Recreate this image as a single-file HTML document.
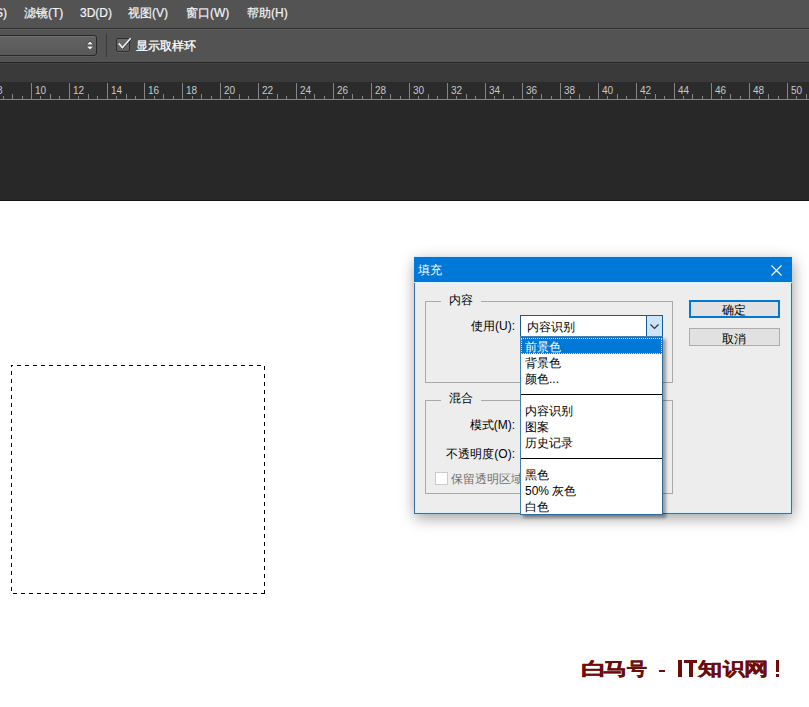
<!DOCTYPE html>
<html><head><meta charset="utf-8">
<style>
*{margin:0;padding:0;box-sizing:border-box;}
html,body{width:809px;height:707px;overflow:hidden;background:#fff;font-family:"Liberation Sans",sans-serif;}
.abs{position:absolute;}
#menubar{left:0;top:0;width:809px;height:28px;background:#535353;}
.mi{position:absolute;top:6px;font-size:12px;line-height:14px;color:#f4f4f4;white-space:nowrap;-webkit-text-stroke:0.2px #f4f4f4;}
#optbar{left:0;top:28px;width:809px;height:35px;background:#535353;border-top:1px solid #303030;}
#optline{left:0;top:29px;width:809px;height:1px;background:#5f5f5f;}
#band{left:0;top:62px;width:809px;height:20px;background:#3a3a3a;border-top:1px solid #242424;box-shadow:inset 0 1px 0 #444;}
#ruler{left:0;top:82px;width:809px;height:18px;background:#2b2b2b;}
#dark{left:0;top:100px;width:809px;height:101px;background:#282828;}
#darkedge{left:0;top:200px;width:809px;height:1px;background:#161616;}
#combo{left:-10px;top:35px;width:107px;height:21px;border:1px solid #282828;border-radius:3px;background:linear-gradient(#636363,#585858);box-shadow:inset 0 1px 0 #707070,0 1px 0 #5c5c5c;}
#sep{left:106px;top:34px;width:1px;height:23px;background:#3a3a3a;}
#chk{left:116px;top:38px;width:14px;height:14px;border:1px solid #2e2e2e;border-radius:2px;background:linear-gradient(#6a6a6a,#5e5e5e);box-shadow:0 1px 0 #606060;}
.ot{position:absolute;left:136px;top:39px;font-size:12px;line-height:14px;color:#fff;white-space:nowrap;-webkit-text-stroke:0.3px #fff;}
.rl{position:absolute;top:85px;font-size:10px;line-height:11px;color:#c8c8c8;}
.tk{position:absolute;width:1px;background:#858585;}
/* dialog */
#dlg{left:414px;top:257px;width:378px;height:257px;background:#ededed;border:1px solid #3a6fa6;box-shadow:inset 0 0 0 1px #d6f2ff,1px 4px 14px rgba(0,0,0,0.38);}
#title{left:414px;top:257px;width:378px;height:26px;background:#0078d7;border-bottom:1px solid #d6f2ff;}
.t{position:absolute;font-size:12px;line-height:14px;color:#000;white-space:nowrap;}
.grp{position:absolute;border:1px solid #a9a9a9;}
.gl{position:absolute;background:#ededed;padding:0 8px;font-size:12px;line-height:14px;color:#000;}
.btn{position:absolute;left:689px;width:91px;height:18px;background:#e1e1e1;border:1px solid #adadad;text-align:center;font-size:12px;line-height:15px;color:#000;}
#cb{left:520px;top:315px;width:143px;height:22px;background:#fff;border:1px solid #1b5a91;}
#cbbtn{left:646px;top:316px;width:16px;height:21px;background:#cce4f7;border-left:1px solid #1b5a91;}
#list{left:520px;top:336px;width:143px;height:179px;background:#fff;border:1px solid #3f7fb5;border-right-color:#2d6aa0;border-bottom-color:#2d6aa0;box-shadow:3px 3px 3px rgba(0,0,0,0.35);}
.li{position:absolute;left:525px;margin-top:1px;font-size:12px;line-height:16px;height:16px;color:#000;white-space:nowrap;}
.lsep{position:absolute;left:521px;width:141px;height:1px;background:#000;}
.mant{position:absolute;}
.wm{position:absolute;top:659px;font-size:21px;line-height:24px;font-weight:bold;color:#6e0b0b;-webkit-text-stroke:0.35px #6e0b0b;white-space:nowrap;transform:scaleY(0.85);transform-origin:0 0;}
</style></head><body>
<div id="menubar" class="abs">
  <div class="mi" style="left:-5px">S)</div>
  <div class="mi" style="left:24px">滤镜(T)</div>
  <div class="mi" style="left:80px">3D(D)</div>
  <div class="mi" style="left:128px">视图(V)</div>
  <div class="mi" style="left:186px">窗口(W)</div>
  <div class="mi" style="left:247px">帮助(H)</div>
</div>
<div id="optbar" class="abs"></div>
<div id="optline" class="abs"></div>
<div id="combo" class="abs"></div>
<svg class="abs" style="left:86px;top:40px" width="8" height="11" viewBox="0 0 8 11"><path d="M0.2 5 L4 0.6 L7.8 5 Z" fill="#303030"/><path d="M0.2 5.8 L4 10.2 L7.8 5.8 Z" fill="#303030" opacity="0.5"/><path d="M1 4.6 L4 1.4 L7 4.6 Z M1 6.4 L4 9.6 L7 6.4 Z" fill="#f4f4f4"/></svg>
<div id="sep" class="abs"></div>
<div id="chk" class="abs"></div>
<svg class="abs" style="left:118px;top:34px" width="15" height="17" viewBox="0 0 15 17"><path d="M1.3 10.2 L4.6 14.4 L13.2 4.8" fill="none" stroke="#262626" stroke-width="1.6" stroke-linejoin="round"/><path d="M0.8 9.4 L4.4 13.8 L12.7 4.3" fill="none" stroke="#f0f0f0" stroke-width="1.7" stroke-linejoin="round"/></svg>
<div class="ot">显示取样环</div>
<div id="band" class="abs"></div>
<div id="ruler" class="abs"></div>
<div id="rulerc">
<div class="tk" style="left:-7px;top:83px;height:16px"></div>
<div class="rl" style="left:-3px">8</div>
<div class="tk" style="left:3px;top:96px;height:3px"></div>
<div class="tk" style="left:12px;top:94px;height:5px"></div>
<div class="tk" style="left:22px;top:96px;height:3px"></div>
<div class="tk" style="left:31px;top:83px;height:16px"></div>
<div class="rl" style="left:35px">10</div>
<div class="tk" style="left:40px;top:96px;height:3px"></div>
<div class="tk" style="left:50px;top:94px;height:5px"></div>
<div class="tk" style="left:59px;top:96px;height:3px"></div>
<div class="tk" style="left:69px;top:83px;height:16px"></div>
<div class="rl" style="left:73px">12</div>
<div class="tk" style="left:78px;top:96px;height:3px"></div>
<div class="tk" style="left:88px;top:94px;height:5px"></div>
<div class="tk" style="left:97px;top:96px;height:3px"></div>
<div class="tk" style="left:107px;top:83px;height:16px"></div>
<div class="rl" style="left:111px">14</div>
<div class="tk" style="left:116px;top:96px;height:3px"></div>
<div class="tk" style="left:126px;top:94px;height:5px"></div>
<div class="tk" style="left:135px;top:96px;height:3px"></div>
<div class="tk" style="left:144px;top:83px;height:16px"></div>
<div class="rl" style="left:148px">16</div>
<div class="tk" style="left:154px;top:96px;height:3px"></div>
<div class="tk" style="left:163px;top:94px;height:5px"></div>
<div class="tk" style="left:173px;top:96px;height:3px"></div>
<div class="tk" style="left:182px;top:83px;height:16px"></div>
<div class="rl" style="left:186px">18</div>
<div class="tk" style="left:192px;top:96px;height:3px"></div>
<div class="tk" style="left:201px;top:94px;height:5px"></div>
<div class="tk" style="left:211px;top:96px;height:3px"></div>
<div class="tk" style="left:220px;top:83px;height:16px"></div>
<div class="rl" style="left:224px">20</div>
<div class="tk" style="left:229px;top:96px;height:3px"></div>
<div class="tk" style="left:239px;top:94px;height:5px"></div>
<div class="tk" style="left:248px;top:96px;height:3px"></div>
<div class="tk" style="left:258px;top:83px;height:16px"></div>
<div class="rl" style="left:262px">22</div>
<div class="tk" style="left:267px;top:96px;height:3px"></div>
<div class="tk" style="left:277px;top:94px;height:5px"></div>
<div class="tk" style="left:286px;top:96px;height:3px"></div>
<div class="tk" style="left:296px;top:83px;height:16px"></div>
<div class="rl" style="left:300px">24</div>
<div class="tk" style="left:305px;top:96px;height:3px"></div>
<div class="tk" style="left:314px;top:94px;height:5px"></div>
<div class="tk" style="left:324px;top:96px;height:3px"></div>
<div class="tk" style="left:333px;top:83px;height:16px"></div>
<div class="rl" style="left:337px">26</div>
<div class="tk" style="left:343px;top:96px;height:3px"></div>
<div class="tk" style="left:352px;top:94px;height:5px"></div>
<div class="tk" style="left:362px;top:96px;height:3px"></div>
<div class="tk" style="left:371px;top:83px;height:16px"></div>
<div class="rl" style="left:375px">28</div>
<div class="tk" style="left:381px;top:96px;height:3px"></div>
<div class="tk" style="left:390px;top:94px;height:5px"></div>
<div class="tk" style="left:400px;top:96px;height:3px"></div>
<div class="tk" style="left:409px;top:83px;height:16px"></div>
<div class="rl" style="left:413px">30</div>
<div class="tk" style="left:418px;top:96px;height:3px"></div>
<div class="tk" style="left:428px;top:94px;height:5px"></div>
<div class="tk" style="left:437px;top:96px;height:3px"></div>
<div class="tk" style="left:447px;top:83px;height:16px"></div>
<div class="rl" style="left:451px">32</div>
<div class="tk" style="left:456px;top:96px;height:3px"></div>
<div class="tk" style="left:466px;top:94px;height:5px"></div>
<div class="tk" style="left:475px;top:96px;height:3px"></div>
<div class="tk" style="left:485px;top:83px;height:16px"></div>
<div class="rl" style="left:489px">34</div>
<div class="tk" style="left:494px;top:96px;height:3px"></div>
<div class="tk" style="left:503px;top:94px;height:5px"></div>
<div class="tk" style="left:513px;top:96px;height:3px"></div>
<div class="tk" style="left:522px;top:83px;height:16px"></div>
<div class="rl" style="left:526px">36</div>
<div class="tk" style="left:532px;top:96px;height:3px"></div>
<div class="tk" style="left:541px;top:94px;height:5px"></div>
<div class="tk" style="left:551px;top:96px;height:3px"></div>
<div class="tk" style="left:560px;top:83px;height:16px"></div>
<div class="rl" style="left:564px">38</div>
<div class="tk" style="left:570px;top:96px;height:3px"></div>
<div class="tk" style="left:579px;top:94px;height:5px"></div>
<div class="tk" style="left:589px;top:96px;height:3px"></div>
<div class="tk" style="left:598px;top:83px;height:16px"></div>
<div class="rl" style="left:602px">40</div>
<div class="tk" style="left:607px;top:96px;height:3px"></div>
<div class="tk" style="left:617px;top:94px;height:5px"></div>
<div class="tk" style="left:626px;top:96px;height:3px"></div>
<div class="tk" style="left:636px;top:83px;height:16px"></div>
<div class="rl" style="left:640px">42</div>
<div class="tk" style="left:645px;top:96px;height:3px"></div>
<div class="tk" style="left:655px;top:94px;height:5px"></div>
<div class="tk" style="left:664px;top:96px;height:3px"></div>
<div class="tk" style="left:674px;top:83px;height:16px"></div>
<div class="rl" style="left:678px">44</div>
<div class="tk" style="left:683px;top:96px;height:3px"></div>
<div class="tk" style="left:692px;top:94px;height:5px"></div>
<div class="tk" style="left:702px;top:96px;height:3px"></div>
<div class="tk" style="left:711px;top:83px;height:16px"></div>
<div class="rl" style="left:715px">46</div>
<div class="tk" style="left:721px;top:96px;height:3px"></div>
<div class="tk" style="left:730px;top:94px;height:5px"></div>
<div class="tk" style="left:740px;top:96px;height:3px"></div>
<div class="tk" style="left:749px;top:83px;height:16px"></div>
<div class="rl" style="left:753px">48</div>
<div class="tk" style="left:759px;top:96px;height:3px"></div>
<div class="tk" style="left:768px;top:94px;height:5px"></div>
<div class="tk" style="left:778px;top:96px;height:3px"></div>
<div class="tk" style="left:787px;top:83px;height:16px"></div>
<div class="rl" style="left:791px">50</div>
<div class="tk" style="left:796px;top:96px;height:3px"></div>
<div class="tk" style="left:806px;top:94px;height:5px"></div>
<div class="tk" style="left:815px;top:96px;height:3px"></div>
<div class="tk" style="left:825px;top:83px;height:16px"></div>
<div class="rl" style="left:829px">52</div>
<div class="tk" style="left:834px;top:96px;height:3px"></div>
<div class="tk" style="left:844px;top:94px;height:5px"></div>
<div class="tk" style="left:853px;top:96px;height:3px"></div>
<div class="tk" style="left:0;top:99px;width:809px;height:1px"></div>
</div>
<div id="dark" class="abs"></div>
<div id="darkedge" class="abs"></div>

<!-- marching ants -->
<div class="mant" style="left:11px;top:365px;width:254px;height:1px;background:linear-gradient(90deg,#000 50%,transparent 50%) 6px 0/8px 1px repeat-x;"></div>
<div class="mant" style="left:11px;top:365px;width:1px;height:229px;background:linear-gradient(180deg,#000 50%,transparent 50%) 0 6px/1px 8px repeat-y;"></div>
<div class="mant" style="left:11px;top:593px;width:254px;height:1px;background:linear-gradient(90deg,#000 50%,transparent 50%) 2px 0/8px 1px repeat-x;"></div>
<div class="mant" style="left:264px;top:365px;width:1px;height:229px;background:linear-gradient(180deg,#000 50%,transparent 50%) 0 1px/1px 8px repeat-y;"></div>

<!-- dialog -->
<div id="dlg" class="abs"></div>
<div id="title" class="abs"></div>
<div class="abs" style="left:414px;top:256px;width:378px;height:1px;background:#cfeaff;opacity:0.7"></div>
<div class="t" style="left:418px;top:263px;color:#fff">填充</div>
<svg class="abs" style="left:771px;top:265px" width="11" height="11" viewBox="0 0 11 11"><path d="M0.5 0.5 L10.5 10.5 M10.5 0.5 L0.5 10.5" stroke="#fff" stroke-width="1.1"/></svg>

<div class="grp" style="left:425px;top:301px;width:248px;height:82px;"></div>
<div class="gl" style="left:441px;top:293px;">内容</div>
<div class="t" style="right:294px;top:319px;">使用(U):</div>

<div class="grp" style="left:425px;top:400px;width:248px;height:94px;"></div>
<div class="gl" style="left:441px;top:391px;">混合</div>
<div class="t" style="right:294px;top:418px;">模式(M):</div>
<div class="t" style="right:294px;top:447px;">不透明度(O):</div>
<div class="abs" style="left:435px;top:472px;width:13px;height:13px;background:#fff;border:1px solid #cccccc;"></div>
<div class="t" style="left:451px;top:472px;color:#707070">保留透明区域</div>

<div class="btn" style="top:300px;border:2px solid #0078d7;"></div>
<div class="btn" style="top:328px;"></div>
<div class="t" style="left:722px;top:303px;">确定</div>
<div class="t" style="left:722px;top:332px;">取消</div>

<div id="cb" class="abs"></div>
<div id="cbbtn" class="abs"></div>
<svg class="abs" style="left:650px;top:324px" width="9" height="6" viewBox="0 0 9 6"><path d="M0.5 0.5 L4.5 4.5 L8.5 0.5" fill="none" stroke="#333" stroke-width="1.2"/></svg>
<div class="t" style="left:527px;top:320px;">内容识别</div>

<div id="list" class="abs"></div>
<div class="abs" style="left:521px;top:337px;width:141px;height:17px;background:#0078d7;"></div><div class="abs" style="left:521px;top:338px;width:141px;height:16px;border:1px dotted #d8e8f6;"></div>
<div class="li" style="top:338px;color:#fff">前景色</div>
<div class="li" style="top:354px;">背景色</div>
<div class="li" style="top:370px;">颜色...</div>
<div class="lsep" style="top:394px;"></div>
<div class="li" style="top:402px;">内容识别</div>
<div class="li" style="top:418px;">图案</div>
<div class="li" style="top:434px;">历史记录</div>
<div class="lsep" style="top:458px;"></div>
<div class="li" style="top:466px;">黑色</div>
<div class="li" style="top:482px;">50% 灰色</div>
<div class="li" style="top:498px;">白色</div>

<!-- watermark -->
<div class="wm" style="left:580.8px;transform:scale(1.231,0.85)">白</div>
<div class="wm" style="left:603.1px;transform:scale(1.150,0.85)">马</div>
<div class="wm" style="left:627.3px;transform:scale(0.943,0.85)">号</div>
<div class="wm" style="left:698.1px;transform:scale(1.147,0.85)">知</div>
<div class="wm" style="left:723.0px;transform:scale(1.032,0.85)">识</div>
<div class="wm" style="left:743.8px;transform:scale(1.156,0.85)">网</div>
<div class="abs" style="left:659px;top:670px;width:6px;height:2px;background:#6e0b0b"></div>
<div class="abs" style="left:678px;top:660px;width:4px;height:17px;background:#6e0b0b"></div>
<div class="abs" style="left:684px;top:660px;width:13px;height:3px;background:#6e0b0b"></div>
<div class="abs" style="left:689px;top:660px;width:4px;height:17px;background:#6e0b0b"></div>
<div class="abs" style="left:775.5px;top:660px;width:3.5px;height:12px;background:#6e0b0b"></div>
<div class="abs" style="left:775.5px;top:674px;width:3.5px;height:3px;background:#6e0b0b"></div>
</body></html>
